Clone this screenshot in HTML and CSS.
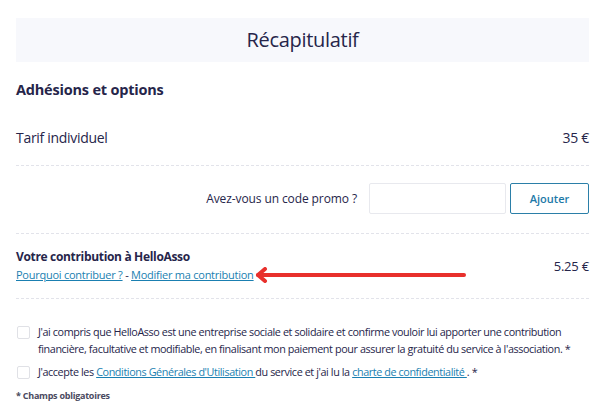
FILE: index.html
```html
<!DOCTYPE html>
<html lang="fr">
<head>
  <meta charset="UTF-8" />
  <meta name="viewport" content="width=device-width, initial-scale=1.0"/>
  <title>Récapitulatif</title>
  <link rel="stylesheet" href="styles.css">
</head>
<body>
  <div class="recap">
    <h1 class="recap-title">Récapitulatif</h1>

    <h2 class="section-title">Adhésions et options</h2>

    <div class="row tarif">
      <span>Tarif individuel</span>
      <span>35 €</span>
    </div>

    <div class="promo">
      <label for="promo">Avez-vous un code promo ?</label>
      <input type="text" id="promo" />
      <button>Ajouter</button>
    </div>

    <div class="row contribution">
      <div>
        <div class="contrib-title">Votre contribution à HelloAsso</div>
        <div class="contrib-links">
          <a href="#">Pourquoi contribuer ?</a> - <a href="#">Modifier ma contribution</a>
          <svg class="arrow" width="214" height="16" viewBox="0 0 214 16">
            <line x1="4" y1="8" x2="210" y2="8" stroke="#e8302c" stroke-width="4" stroke-linecap="round"/>
            <polyline points="11,2 4,8 11,14" fill="none" stroke="#e8302c" stroke-width="4" stroke-linecap="round" stroke-linejoin="round"/>
          </svg>
        </div>
      </div>
      <span>5.25 €</span>
    </div>

    <div class="checks">
      <label class="check">
        <span class="box"></span>
        <span>J'ai compris que HelloAsso est une entreprise sociale et solidaire et confirme vouloir lui apporter une contribution financière, facultative et modifiable, en finalisant mon paiement pour assurer la gratuité du service à l'association. *</span>
      </label>
      <label class="check">
        <span class="box"></span>
        <span>J'accepte les <a href="#">Conditions Générales d'Utilisation </a> du service et j'ai lu la <a href="#">charte de confidentialité </a>. *</span>
      </label>
    </div>

    <p class="required">* Champs obligatoires</p>
  </div>
</body>
</html>
```

FILE: styles.css
```css
body {
  margin: 0;
  font-family: "Open Sans", Arial, sans-serif;
  color: #26254a;
  background: white;
}
.recap {
  padding: 18px 16px 0 16px;
}
.recap-title {
  margin: 0;
  background: #f7f8fc;
  height: 44px;
  line-height: 44px;
  text-align: center;
  font-size: 20px;
  font-weight: 400;
  letter-spacing: -0.3px;
}
.section-title {
  margin: 17px 0 0 0;
  font-size: 14.5px;
  font-weight: 700;
  letter-spacing: -0.2px;
  line-height: 22px;
}
.row {
  display: flex;
  justify-content: space-between;
  align-items: center;
}
.tarif {
  font-size: 14px;
  letter-spacing: -0.3px;
  line-height: 20px;
  padding: 27px 0 17px 0;
  border-bottom: 1px dashed #e2e3ea;
}
.promo {
  display: flex;
  justify-content: flex-end;
  align-items: center;
  padding: 17px 0 19px 0;
  border-bottom: 1px dashed #e2e3ea;
  font-size: 12px;
  letter-spacing: -0.1px;
}
.promo label {
  margin-right: 12px;
}
.promo input {
  width: 135px;
  height: 29px;
  border: 1px solid #e8e9ee;
  border-radius: 2px;
  margin: 0 4px 0 0;
  padding: 0;
}
.promo button {
  width: 79px;
  height: 31px;
  background: white;
  border: 1px solid #2b7fa8;
  border-radius: 2px;
  color: #1d79a8;
  font-family: "Open Sans", Arial, sans-serif;
  font-size: 11px;
  font-weight: 600;
  cursor: pointer;
}
.contribution {
  padding: 14px 0 15px 0;
  border-bottom: 1px dashed #e2e3ea;
  font-size: 13px;
  letter-spacing: -0.2px;
}
.contrib-title {
  font-weight: 700;
  font-size: 12px;
  letter-spacing: -0.33px;
  line-height: 18px;
}
.contrib-links {
  position: relative;
  font-size: 11px;
  letter-spacing: -0.25px;
  line-height: 17px;
}
a {
  color: #1a7fb1;
}
.arrow {
  position: absolute;
  left: 238px;
  top: 1px;
}
.checks {
  padding-top: 24px;
}
.check {
  display: flex;
  align-items: flex-start;
  gap: 8px;
  font-size: 10.8px;
  letter-spacing: -0.4px;
  line-height: 17px;
  margin-bottom: 6px;
}
.box {
  flex: none;
  width: 11px;
  height: 11px;
  border: 1px solid #e0e1e6;
  border-radius: 2px;
  margin: 3px 0 0 1px;
}
.required {
  margin: 10px 0 0 0;
  font-size: 9px;
  letter-spacing: -0.25px;
  line-height: 12px;
  font-weight: 700;
  color: #4a4a60;
}
```
